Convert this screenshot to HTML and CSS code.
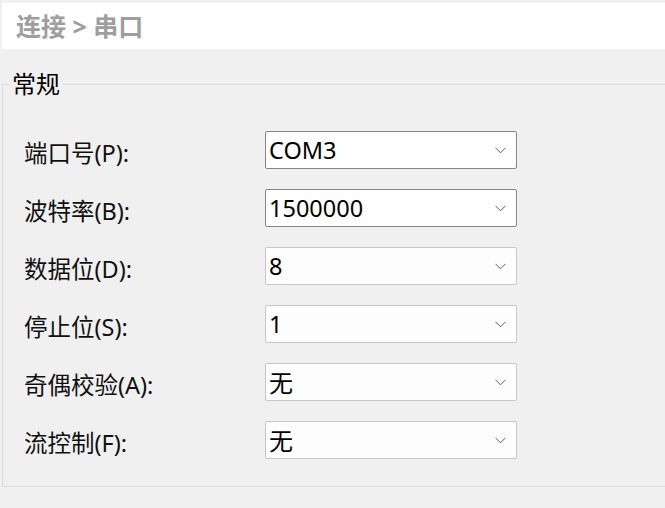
FILE: index.html
```html
<!DOCTYPE html>
<html lang="zh-CN">
<head>
<meta charset="utf-8">
<title>串口</title>
<link rel="stylesheet" href="styles.css">
</head>
<body>
<div class="crumb">连接 &gt; 串口</div>
<fieldset class="group">
  <legend class="group-title">常规</legend>
  <div class="rows">
    <div class="row"><span class="label">端口号(P):</span><div class="combo dark"><span class="value">COM3</span><svg class="chev" width="11" height="7" viewBox="0 0 11 7"><polyline points="0.5,0.8 5.5,5.8 10.5,0.8" fill="none" stroke="#606060" stroke-width="1"/></svg></div></div>
    <div class="row"><span class="label">波特率(B):</span><div class="combo dark"><span class="value">1500000</span><svg class="chev" width="11" height="7" viewBox="0 0 11 7"><polyline points="0.5,0.8 5.5,5.8 10.5,0.8" fill="none" stroke="#606060" stroke-width="1"/></svg></div></div>
    <div class="row"><span class="label">数据位(D):</span><div class="combo"><span class="value">8</span><svg class="chev" width="11" height="7" viewBox="0 0 11 7"><polyline points="0.5,0.8 5.5,5.8 10.5,0.8" fill="none" stroke="#606060" stroke-width="1"/></svg></div></div>
    <div class="row"><span class="label">停止位(S):</span><div class="combo"><span class="value">1</span><svg class="chev" width="11" height="7" viewBox="0 0 11 7"><polyline points="0.5,0.8 5.5,5.8 10.5,0.8" fill="none" stroke="#606060" stroke-width="1"/></svg></div></div>
    <div class="row"><span class="label">奇偶校验(A):</span><div class="combo"><span class="value cjk">无</span><svg class="chev" width="11" height="7" viewBox="0 0 11 7"><polyline points="0.5,0.8 5.5,5.8 10.5,0.8" fill="none" stroke="#606060" stroke-width="1"/></svg></div></div>
    <div class="row"><span class="label">流控制(F):</span><div class="combo"><span class="value cjk">无</span><svg class="chev" width="11" height="7" viewBox="0 0 11 7"><polyline points="0.5,0.8 5.5,5.8 10.5,0.8" fill="none" stroke="#606060" stroke-width="1"/></svg></div></div>
  </div>
</fieldset>
</body>
</html>
```

FILE: styles.css
```css
html, body {
  margin: 0;
  padding: 0;
  background: #f0f0f0;
  height: 100%;
}
body {
  font-family: "Noto Sans", "Noto Sans CJK SC", sans-serif;
  color: #000;
  overflow: hidden;
}
.crumb {
  margin: 3px 0 0 2px;
  height: 46px;
  box-sizing: border-box;
  background: #fff;
  padding-left: 14px;
  font-size: 25px;
  font-weight: bold;
  color: #9e9e9e;
  line-height: 46px;
}
.group {
  margin: 23px 0 0 2px;
  padding: 0 0 27px 0;
  border: 1px solid #dadada;
  border-right: none;
  min-width: 0;
}
.group-title {
  margin-left: 6px;
  padding: 0 3px;
  font-size: 24px;
  line-height: 24px;
  color: #000;
}
.rows {
  display: flex;
  flex-direction: column;
  gap: 20px;
  padding: 35px 0 0 21px;
}
.row {
  display: flex;
  align-items: center;
  height: 38px;
}
.label {
  width: 241px;
  font-size: 23.5px;
  line-height: 26px;
  color: #111;
  padding-top: 5px;
}
.combo {
  width: 252px;
  height: 38px;
  box-sizing: border-box;
  border: 1px solid #c6c6c6;
  border-radius: 2px;
  background: #fdfdfd;
  display: flex;
  align-items: center;
  justify-content: space-between;
  padding: 0 10px 0 3px;
}
.combo.dark {
  border-color: #868686;
  background: #fff;
}
.value {
  font-size: 23.5px;
  line-height: 26px;
}
.value.cjk {
  font-size: 24px;
  padding-top: 2px;
}
.chev {
  display: block;
}
```
